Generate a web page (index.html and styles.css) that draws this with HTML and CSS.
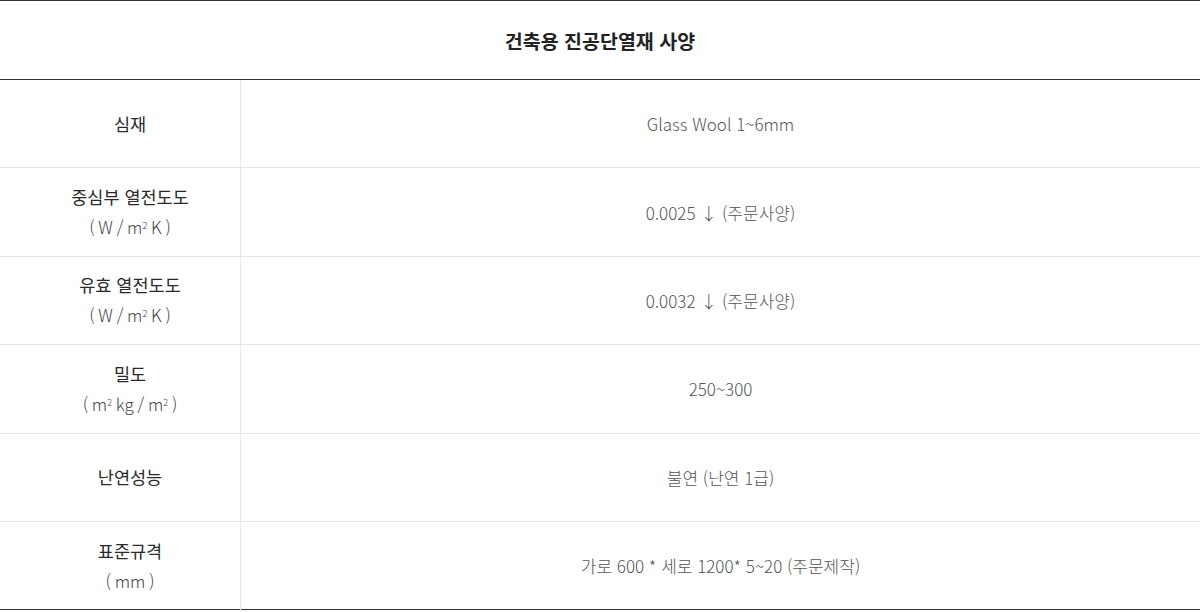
FILE: index.html
```html
<!DOCTYPE html>
<html lang="ko">
<head>
    <meta charset="UTF-8">
    <title>건축용 진공단열재 사양</title>
    <link rel="stylesheet" href="styles.css">
</head>
<body>
    <table class="spec-table">
        <thead>
            <tr>
                <th colspan="2" class="spec-title">건축용 진공단열재 사양</th>
            </tr>
        </thead>
        <tbody>
            <tr>
                <th>심재</th>
                <td>Glass Wool 1~6mm</td>
            </tr>
            <tr>
                <th>중심부 열전도도<span class="unit">( W / m<sup>2</sup> K )</span></th>
                <td>0.0025 ↓ (주문사양)</td>
            </tr>
            <tr>
                <th>유효 열전도도<span class="unit">( W / m<sup>2</sup> K )</span></th>
                <td>0.0032 ↓ (주문사양)</td>
            </tr>
            <tr>
                <th>밀도<span class="unit">( m<sup>2</sup> kg / m<sup>2</sup> )</span></th>
                <td>250~300</td>
            </tr>
            <tr>
                <th>난연성능</th>
                <td>불연 (난연 1급)</td>
            </tr>
            <tr>
                <th>표준규격<span class="unit">( mm )</span></th>
                <td>가로 600 * 세로 1200* 5~20 (주문제작)</td>
            </tr>
        </tbody>
    </table>
</body>
</html>
```

FILE: styles.css
```css
body {
    margin: 0;
    background: #fff;
    font-family: "Noto Sans CJK KR", "Noto Sans", sans-serif;
}

.spec-table {
    width: 1200px;
    border-collapse: collapse;
    border-top: 1px solid #333;
    border-bottom: 1px solid #333;
}

.spec-title {
    height: 78px;
    font-size: 19.5px;
    font-weight: bold;
    color: #222;
    border-bottom: 1px solid #333;
    padding: 0;
}

tbody tr {
    height: 88.4px;
    border-top: 1px solid #e8e8e8;
}

tbody tr:first-child {
    border-top: none;
}

tbody th {
    width: 220px;
    font-size: 17.5px;
    font-weight: normal;
    color: #2a2a2a;
    line-height: 30px;
    border-right: 1px solid #e8e8e8;
    padding: 0 0 0 20px;
}

tbody td {
    text-align: center;
    font-size: 17px;
    font-weight: 300;
    color: #555;
    padding: 0;
}

.unit {
    display: block;
    font-size: 17px;
    font-weight: 300;
    color: #444;
    word-spacing: -1px;
}

.unit sup {
    font-size: 9px;
    vertical-align: 5px;
    line-height: 0;
}
```
